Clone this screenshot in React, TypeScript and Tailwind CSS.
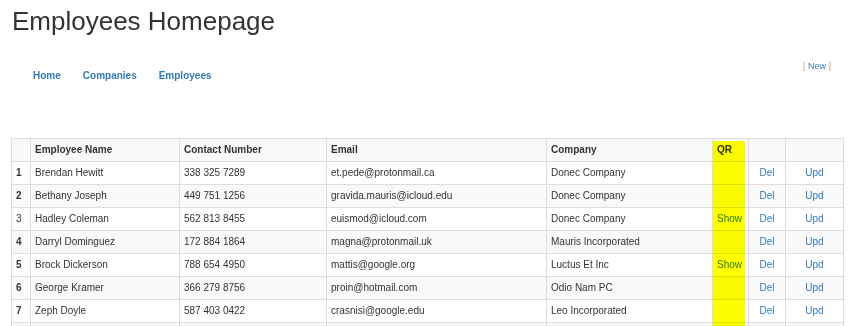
type Employee = {
  id: number;
  name: string;
  phone: string;
  email: string;
  company: string;
  qr: boolean;
};

const employees: Employee[] = [
  { id: 1, name: "Brendan Hewitt", phone: "338 325 7289", email: "et.pede@protonmail.ca", company: "Donec Company", qr: false },
  { id: 2, name: "Bethany Joseph", phone: "449 751 1256", email: "gravida.mauris@icloud.edu", company: "Donec Company", qr: false },
  { id: 3, name: "Hadley Coleman", phone: "562 813 8455", email: "euismod@icloud.com", company: "Donec Company", qr: true },
  { id: 4, name: "Darryl Dominguez", phone: "172 884 1864", email: "magna@protonmail.uk", company: "Mauris Incorporated", qr: false },
  { id: 5, name: "Brock Dickerson", phone: "788 654 4950", email: "mattis@google.org", company: "Luctus Et Inc", qr: true },
  { id: 6, name: "George Kramer", phone: "366 279 8756", email: "proin@hotmail.com", company: "Odio Nam PC", qr: false },
  { id: 7, name: "Zeph Doyle", phone: "587 403 0422", email: "crasnisi@google.edu", company: "Leo Incorporated", qr: false },
];

const cell = "border border-[#ddd] px-[4px] py-0 leading-[22px] align-middle whitespace-nowrap overflow-hidden";

export default function App() {
  return (
    <div className="min-h-[326px] bg-white text-[#333] font-['Liberation_Sans',Arial,sans-serif]">
      {/* Page title */}
      <h1 className="pl-[12px] pt-[7px] text-[26px] leading-[29px] font-normal text-[#333]">
        Employees Homepage
      </h1>

      {/* Nav + new link */}
      <div className="mt-[20px] flex items-start justify-between pr-[18px]">
        <nav className="mt-[10px] flex pl-[22px]">
          {["Home", "Companies", "Employees"].map((item) => (
            <a
              key={item}
              href="#"
              className="px-[11px] text-[10px] font-bold leading-[20px] text-[#337ab7]"
            >
              {item}
            </a>
          ))}
        </nav>
        <div className="text-[9px] leading-[20px]">
          <span className="text-[#c9a46a]">[</span>{" "}
          <a href="#" className="text-[#337ab7]">
            New
          </a>{" "}
          <span className="text-[#c9a46a]">]</span>
        </div>
      </div>

      {/* Employees table */}
      <div className="relative mt-[52px] ml-[11px] w-[832px]">
        <table className="w-[832px] table-fixed border-collapse text-[10px]">
          <colgroup>
            <col className="w-[19px]" />
            <col className="w-[149px]" />
            <col className="w-[147px]" />
            <col className="w-[220px]" />
            <col className="w-[166px]" />
            <col className="w-[36px]" />
            <col className="w-[37px]" />
            <col className="w-[58px]" />
          </colgroup>
          <tbody>
            <tr className="bg-[#f9f9f9] font-bold">
              <th className={`${cell} text-left`}></th>
              <th className={`${cell} text-left`}>Employee Name</th>
              <th className={`${cell} text-left`}>Contact Number</th>
              <th className={`${cell} text-left`}>Email</th>
              <th className={`${cell} text-left`}>Company</th>
              <th className={`${cell} text-left`}>QR</th>
              <th className={`${cell} text-left`}></th>
              <th className={`${cell} text-left`}></th>
            </tr>
            {employees.map((e, i) => (
              <tr key={e.id} className={i % 2 === 0 ? "bg-white" : "bg-[#f9f9f9]"}>
                <th className={`${cell} text-left ${e.id === 3 ? "font-normal" : "font-bold"}`}>{e.id}</th>
                <td className={`${cell} text-left`}>{e.name}</td>
                <td className={`${cell} text-left`}>{e.phone}</td>
                <td className={`${cell} text-left`}>{e.email}</td>
                <td className={`${cell} text-left`}>{e.company}</td>
                <td className={`${cell} text-left`}>
                  {e.qr && (
                    <a href="#" className="text-[#337ab7]">
                      Show
                    </a>
                  )}
                </td>
                <td className={`${cell} text-center`}>
                  <a href="#" className="text-[#337ab7]">
                    Del
                  </a>
                </td>
                <td className={`${cell} text-center`}>
                  <a href="#" className="text-[#337ab7]">
                    Upd
                  </a>
                </td>
              </tr>
            ))}
            {/* next row, cut off by the window */}
            <tr className="bg-[#f9f9f9]">
              {Array.from({ length: 8 }).map((_, i) => (
                <td key={i} className={cell}>
                  &nbsp;
                </td>
              ))}
            </tr>
          </tbody>
        </table>

        {/* highlighter over the QR column */}
        <div className="pointer-events-none absolute left-[702px] top-[3px] h-[220px] w-[32px] bg-[#ffff00] mix-blend-multiply" />
      </div>
    </div>
  );
}
